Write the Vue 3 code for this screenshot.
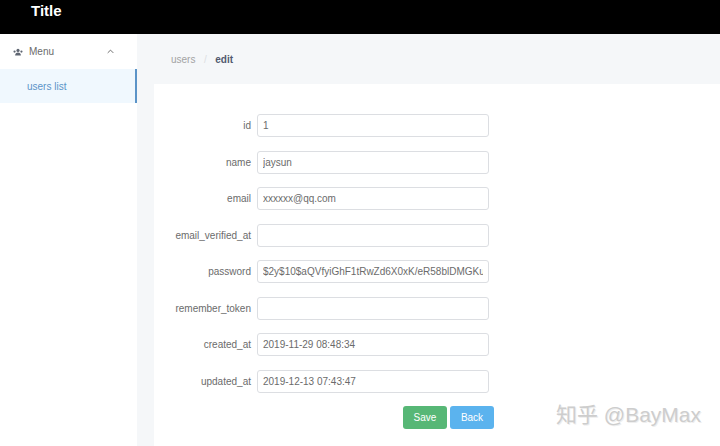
<script setup>
const fields = [
  { label: "id", value: "1" },
  { label: "name", value: "jaysun" },
  { label: "email", value: "xxxxxx@qq.com" },
  { label: "email_verified_at", value: "" },
  { label: "password", value: "$2y$10$aQVfyiGhF1tRwZd6X0xK/eR58blDMGKucSg1" },
  { label: "remember_token", value: "" },
  { label: "created_at", value: "2019-11-29 08:48:34" },
  { label: "updated_at", value: "2019-12-13 07:43:47" },
];
</script>

<template>
  <div class="layout">
    <header class="topbar"><span class="title">Title</span></header>
    <div class="body">
      <aside class="sider">
        <div class="submenu">
          <svg class="people" viewBox="0 0 12 10" width="10" height="8">
            <circle cx="6" cy="3" r="2" fill="#5f6672" />
            <path d="M2.4 9.500c0-2.600 1.500-3.900 3.600-3.900s3.600 1.300 3.600 3.900z" fill="#5f6672" />
            <circle cx="1.700" cy="4.400" r="1.400" fill="#5f6672" />
            <circle cx="10.300" cy="4.400" r="1.400" fill="#5f6672" />
          </svg>
          <span class="submenu-name">Menu</span>
          <svg class="chevron" viewBox="0 0 10 6" width="7" height="5">
            <path d="M1 5l4-4 4 4" fill="none" stroke="#555" stroke-width="1.200" />
          </svg>
        </div>
        <div class="item-active">users list</div>
      </aside>
      <main class="content">
        <div class="crumbs">
          <span class="crumb">users</span>
          <span class="sep">/</span>
          <span class="crumb-last">edit</span>
        </div>
        <div class="card">
          <form class="form" @submit.prevent>
            <div class="row" v-for="f in fields" :key="f.label">
              <label class="lab">{{ f.label }}</label>
              <input class="inp" type="text" :value="f.value" />
            </div>
            <div class="actions">
              <button class="btn save" type="button">Save</button>
              <button class="btn back" type="button">Back</button>
            </div>
          </form>
          <span class="mark">知乎 @BayMax</span>
        </div>
      </main>
    </div>
  </div>
</template>

<style scoped>
.layout {
  width: 720px;
  height: 446px;
  overflow: hidden;
  display: flex;
  flex-direction: column;
  font-family: "Liberation Sans", Arial, sans-serif;
  font-size: 10px;
  color: #6b6b6b;
}

.topbar {
  height: 34px;
  background: #000;
  flex: none;
}

.title {
  display: block;
  padding: 2px 0 0 31px;
  color: #fff;
  font-size: 15px;
  font-weight: bold;
  line-height: 17px;
}

.body {
  flex: 1;
  display: flex;
  min-height: 0;
}

.sider {
  width: 137px;
  flex: none;
  background: #fff;
}

.submenu {
  height: 35px;
  display: flex;
  align-items: center;
  padding-left: 13px;
}

.submenu-name {
  margin-left: 6px;
}

.chevron {
  margin-left: auto;
  margin-right: 23px;
}

.item-active {
  height: 34px;
  line-height: 36px;
  padding-left: 27px;
  background: #f0f8fe;
  border-right: 2px solid #5b94c8;
  color: #5b94c8;
}

.content {
  flex: 1;
  background: #f5f7f9;
  padding-left: 17px;
  min-width: 0;
}

.crumbs {
  height: 50px;
  display: flex;
  align-items: center;
  padding: 0 0 0 17px;
}

.crumb {
  color: #a3a3a3;
}

.sep {
  color: #dcdee2;
  margin: 0 8.500px;
}

.crumb-last {
  color: #515a6e;
  font-weight: bold;
}

.card {
  position: relative;
  background: #fff;
  height: 362px;
  padding-top: 30px;
  box-sizing: border-box;
}

.row {
  display: flex;
  align-items: center;
  height: 23px;
  margin-bottom: 13.5px;
}

.lab {
  width: 103px;
  padding-right: 6px;
  flex: none;
  text-align: right;
  box-sizing: border-box;
  white-space: nowrap;
}

.inp {
  width: 232px;
  height: 23px;
  box-sizing: border-box;
  border: 1px solid #dcdee2;
  border-radius: 3px;
  padding: 0 5px;
  font: inherit;
  color: #6b6b6b;
  background: #fff;
  outline: none;
}

.actions {
  display: flex;
  gap: 3px;
  padding-left: 249px;
  margin-top: -0.5px;
}

.btn {
  width: 44px;
  height: 23px;
  border: 0;
  border-radius: 3px;
  color: #fff;
  font: inherit;
  padding: 0;
}

.save {
  background: #57b776;
}

.back {
  background: #5bb3ee;
}

.mark {
  position: absolute;
  left: 402px;
  top: 316px;
  font-family: "Liberation Sans", "Noto Sans CJK SC", sans-serif;
  font-size: 21px;
  line-height: 30px;
  color: #cdcdcd;
  text-shadow: 1px 1px 0 #eee;
  white-space: nowrap;
}
</style>
